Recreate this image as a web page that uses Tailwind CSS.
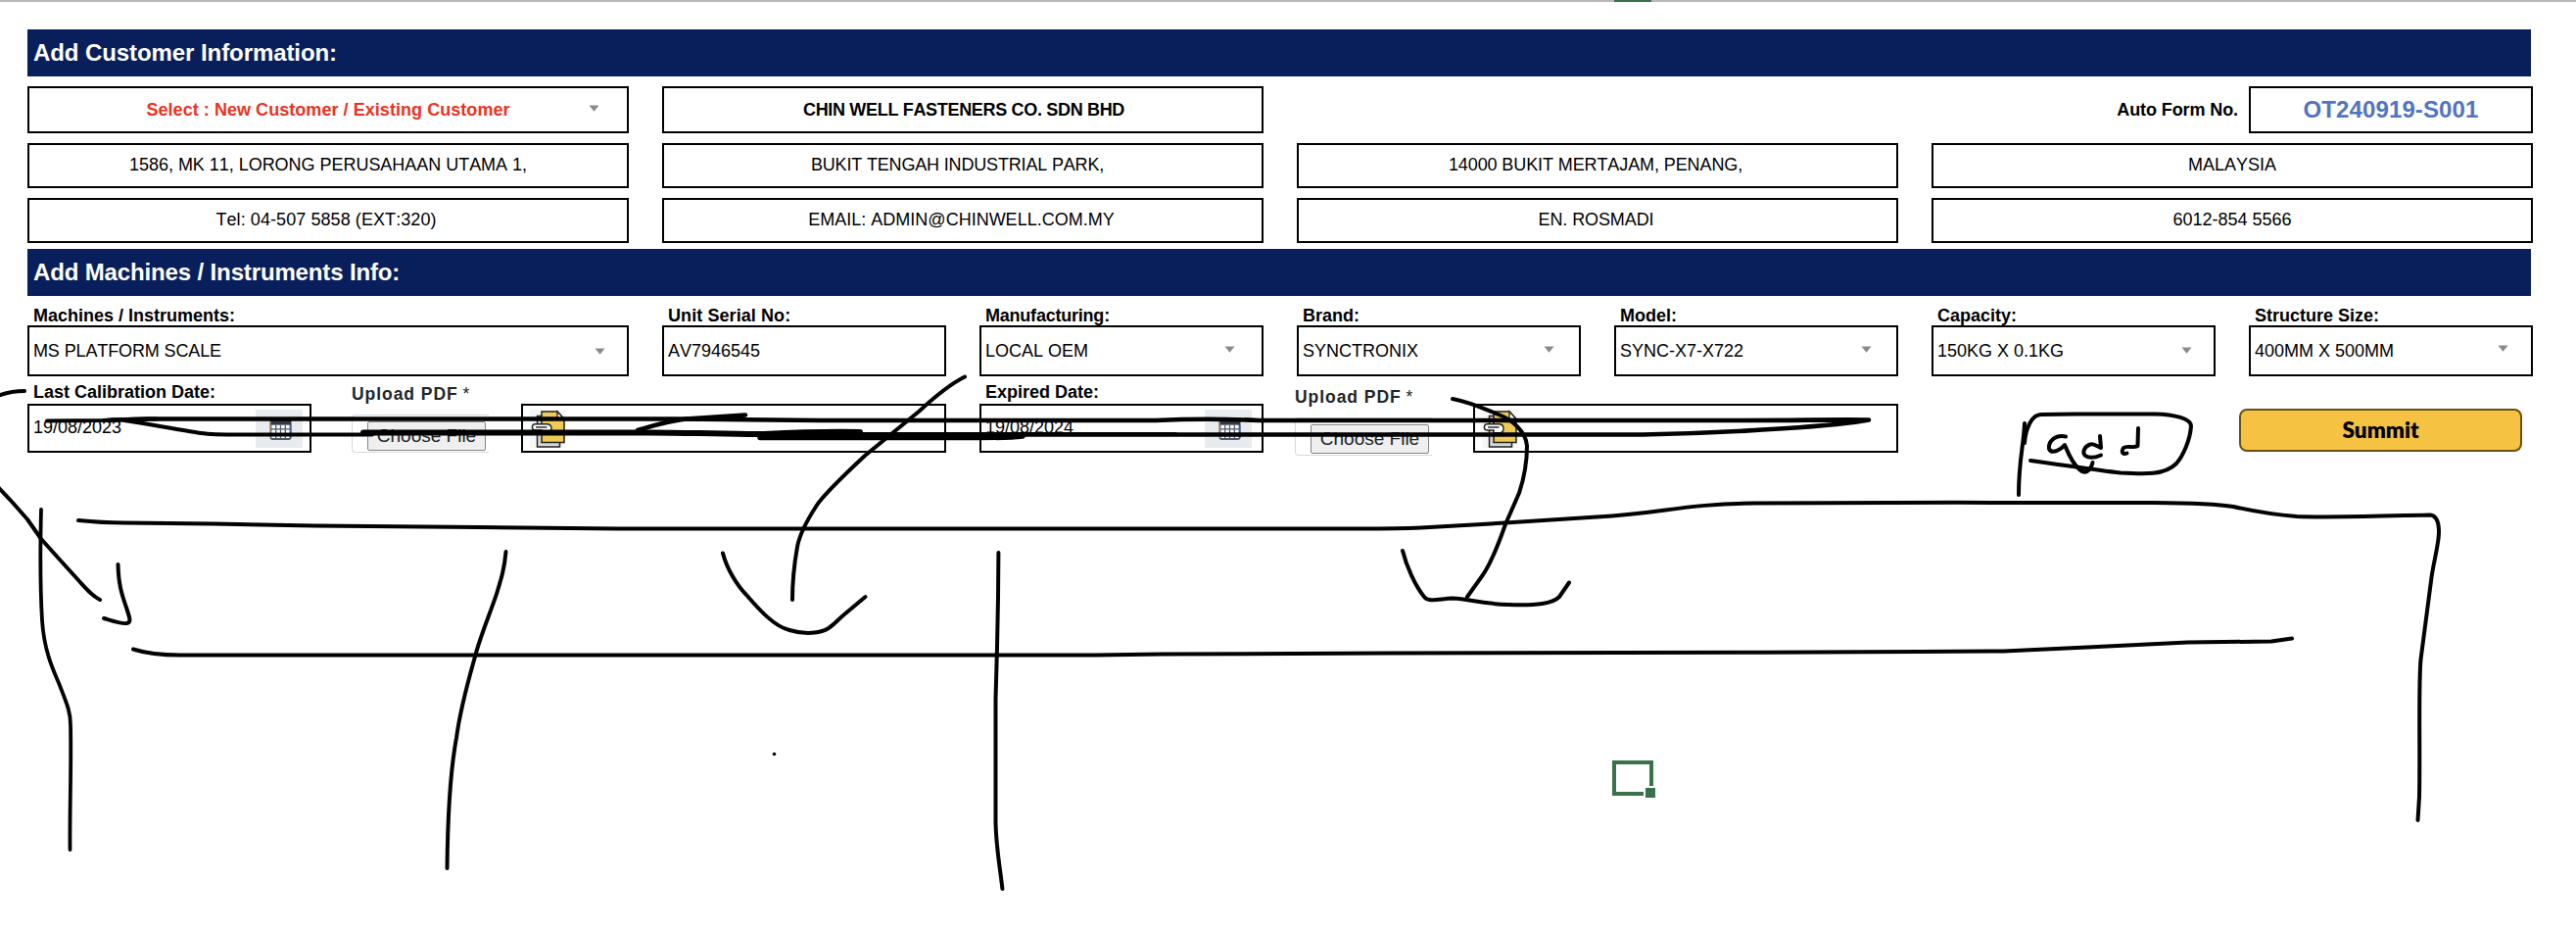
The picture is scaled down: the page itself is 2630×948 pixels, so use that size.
<!DOCTYPE html>
<html lang="en">
<head>
<meta charset="utf-8">
<title>Calibration Order Form</title>
<script src="https://cdn.jsdelivr.net/npm/@tailwindcss/browser@4"></script>
</head>
<body class="relative h-[948px] w-[2630px] overflow-hidden bg-white font-['Liberation_Sans',Arial,sans-serif] text-[18px] leading-[20px] text-black [font-kerning:none]">
<svg width="0" height="0" class="absolute">
  <defs>
    <symbol id="caret" viewBox="0 0 11 7"><path d="M0.5 0.5H10.5L5.5 6.8Z" fill="#8a8a8a"/></symbol>
    <symbol id="calendar" viewBox="0 0 24 24">
      <rect x="1.5" y="3" width="21" height="20" rx="1.5" fill="#fff" stroke="#4c5870" stroke-width="2"/>
      <path d="M1 3h22v5H1z" fill="#343a45"/>
      <path d="M2 12.5h20M2 17.5h20M7 8v15M12 8v15M17 8v15" stroke="#4c5870" stroke-width="1.3"/>
      <path d="M1 4v18" stroke="#d8a45a" stroke-width="1"/><path d="M23 8v14" stroke="#3d62c4" stroke-width="1"/>
      <path d="M6 0v4M18 0v4" stroke="#343a45" stroke-width="2"/>
    </symbol>
    <symbol id="attach" viewBox="0 0 36 39">
      <path d="M0 0h36v39H0z" fill="#f7f7f7"/>
      <path d="M7.500 6.500h23v31.500h-23z" fill="#d9d9d9" stroke="#222" stroke-width="1.5"/>
      <path d="M12 2h16l7 7.500V33.500H12z" fill="#efcb55" stroke="#222" stroke-width="1.5"/>
      <path d="M28 2v7.500h7z" fill="#fff" stroke="#222" stroke-width="1.3"/>
      <path d="M12 21H5.500a3 3 0 0 1 0-6.200H17c3.500 0 5 2 5 4.500s-1.500 4.500-4 4.500H12z" fill="#fff" stroke="#222" stroke-width="1.4"/>
      <path d="M6 18h11.500" stroke="#222" stroke-width="1.4"/>
    </symbol>
  </defs>
</svg>

<div class="flex h-[2px] bg-[#b8b8b8]"><div class="ml-[1648px] w-[38px] bg-[#39714a]"></div></div>

<main class="px-[28px] pt-[28px]">
  <h1 class="flex h-[48px] w-[2556px] items-center bg-[#091f5c] pl-[6px] text-[24px] leading-[28px] font-bold tracking-[-0.08px] text-white">Add Customer Information:</h1>

  <div class="mt-[10px] grid w-[2558px] grid-cols-8 gap-x-[34px] gap-y-[10px] text-center">
    <div class="relative col-span-2 h-[48px] border-2 border-black pt-[12px] font-bold tracking-[0.05px] text-[#e93323]">Select : New Customer / Existing Customer<svg class="absolute top-[17px] right-[28px] h-[7px] w-[11px]"><use href="#caret"/></svg></div>
    <div class="col-span-2 h-[48px] border-2 border-black pt-[12px] pl-[2px] font-bold tracking-[-0.32px]">CHIN WELL FASTENERS CO. SDN BHD</div>
    <div class="col-span-3 -mr-[23px] pt-[14px] text-right font-bold tracking-[-0.1px]">Auto Form No.</div>
    <div class="h-[48px] border-2 border-black pt-[8px] text-[24px] leading-[28px] font-bold tracking-[0.12px] text-[#5175c1]">OT240919-S001</div>

    <div class="col-span-2 h-[46px] border-2 border-black pt-[10px] tracking-[-0.03px]">1586, MK 11, LORONG PERUSAHAAN UTAMA 1,</div>
    <div class="col-span-2 h-[46px] border-2 border-black pt-[10px] pr-[11px] tracking-[-0.17px]">BUKIT TENGAH INDUSTRIAL PARK,</div>
    <div class="col-span-2 h-[46px] border-2 border-black pt-[10px] pr-[4px] tracking-[-0.1px]">14000 BUKIT MERTAJAM, PENANG,</div>
    <div class="col-span-2 h-[46px] border-2 border-black pt-[10px]">MALAYSIA</div>

    <div class="col-span-2 h-[46px] border-2 border-black pt-[10px] pr-[4px] tracking-[0.08px]">Tel: 04-507 5858 (EXT:320)</div>
    <div class="col-span-2 h-[46px] border-2 border-black pt-[10px] pr-[3px]">EMAIL: ADMIN@CHINWELL.COM.MY</div>
    <div class="col-span-2 h-[46px] border-2 border-black pt-[10px] pr-[3px] tracking-[-0.1px]">EN. ROSMADI</div>
    <div class="col-span-2 h-[46px] border-2 border-black pt-[10px]">6012-854 5566</div>
  </div>

  <h2 class="mt-[6px] flex h-[48px] w-[2556px] items-center bg-[#091f5c] pl-[6px] text-[24px] leading-[28px] font-bold tracking-[-0.14px] text-white">Add Machines / Instruments Info:</h2>

  <div class="grid w-[2558px] grid-cols-8 gap-x-[34px]">
    <div class="col-span-2"><div class="h-[30px] pt-[10px] pl-[6px] font-bold">Machines / Instruments:</div>
      <div class="flex h-[52px] items-center justify-between border-2 border-black pr-[22px] pl-[4px]"><span class="tracking-[-0.12px]">MS PLATFORM SCALE</span><svg class="h-[7px] w-[11px]"><use href="#caret"/></svg></div></div>
    <div><div class="h-[30px] pt-[10px] pl-[6px] font-bold tracking-[0.08px]">Unit Serial No:</div>
      <div class="flex h-[52px] items-center border-2 border-black pl-[4px]">AV7946545</div></div>
    <div><div class="h-[30px] pt-[10px] pl-[6px] font-bold tracking-[-0.22px]">Manufacturing:</div>
      <div class="flex h-[52px] items-center justify-between border-2 border-black pr-[27px] pl-[4px]">LOCAL OEM<svg class="mb-[4px] h-[7px] w-[11px]"><use href="#caret"/></svg></div></div>
    <div><div class="h-[30px] pt-[10px] pl-[6px] font-bold">Brand:</div>
      <div class="flex h-[52px] items-center justify-between border-2 border-black pr-[25px] pl-[4px]">SYNCTRONIX<svg class="mb-[4px] h-[7px] w-[11px]"><use href="#caret"/></svg></div></div>
    <div><div class="h-[30px] pt-[10px] pl-[6px] font-bold">Model:</div>
      <div class="flex h-[52px] items-center justify-between border-2 border-black pr-[25px] pl-[4px]">SYNC-X7-X722<svg class="mb-[4px] h-[7px] w-[11px]"><use href="#caret"/></svg></div></div>
    <div><div class="h-[30px] pt-[10px] pl-[6px] font-bold">Capacity:</div>
      <div class="flex h-[52px] items-center justify-between border-2 border-black pr-[22px] pl-[4px]">150KG X 0.1KG<svg class="mb-[2px] h-[7px] w-[11px]"><use href="#caret"/></svg></div></div>
    <div><div class="h-[30px] pt-[10px] pl-[6px] font-bold">Structure Size:</div>
      <div class="flex h-[52px] items-center justify-between border-2 border-black pr-[23px] pl-[4px]">400MM X 500MM<svg class="mb-[6px] h-[7px] w-[11px]"><use href="#caret"/></svg></div></div>
  </div>

  <div class="flex h-[84px]">
    <div class="w-[290px]"><div class="h-[28px] pt-[6px] pl-[6px] font-bold">Last Calibration Date:</div>
      <div class="flex h-[50px] justify-between border-2 border-black pt-[4px] pr-[7px] pl-[4px]"><span class="pt-[8px]">19/08/2023</span><span class="flex h-[39px] w-[48px] items-end justify-center bg-[#e8ecef] pb-[8px]"><svg class="ml-[2px] h-[23px] w-[23px]"><use href="#calendar"/></svg></span></div></div>
    <div class="w-[214px] pt-[9px] pl-[41px] text-[#212529]"><div class="h-[30px] text-[17.5px] leading-[18px] font-bold tracking-[0.95px]">Upload PDF <span class="-ml-[1px] font-normal">*</span></div>
      <div class="h-[39px] w-[140px] rounded-l-[4px] border border-r-0 border-[#d5dade] pt-[6px] pl-[15px]"><button class="block h-[30px] w-[121px] rounded-[2px] border border-[#858585] bg-[#efefef] text-[19px] leading-[24px]">Choose File</button></div></div>
    <div class="w-[434px] pt-[28px]"><div class="h-[50px] border-2 border-black pt-[4px] pl-[7px]"><svg class="h-[39px] w-[36px]"><use href="#attach"/></svg></div></div>
    <div class="ml-[34px] w-[290px]"><div class="h-[28px] pt-[6px] pl-[6px] font-bold">Expired Date:</div>
      <div class="flex h-[50px] justify-between border-2 border-black pt-[4px] pr-[10px] pl-[4px]"><span class="pt-[8px]">19/08/2024</span><span class="flex h-[39px] w-[48px] items-end justify-center bg-[#e8ecef] pb-[8px]"><svg class="ml-[2px] h-[23px] w-[23px]"><use href="#calendar"/></svg></span></div></div>
    <div class="w-[214px] pt-[12px] pl-[32px] text-[#212529]"><div class="h-[30px] text-[17.5px] leading-[18px] font-bold tracking-[0.95px]">Upload PDF <span class="-ml-[1px] font-normal">*</span></div>
      <div class="h-[39px] w-[140px] rounded-l-[4px] border border-r-0 border-[#d5dade] pt-[6px] pl-[15px]"><button class="block h-[30px] w-[121px] rounded-[2px] border border-[#858585] bg-[#efefef] text-[19px] leading-[24px]">Choose File</button></div></div>
    <div class="w-[434px] pt-[28px]"><div class="h-[50px] border-2 border-black pt-[4px] pl-[7px]"><svg class="h-[39px] w-[36px]"><use href="#attach"/></svg></div></div>
    <div class="pt-[33px] pl-[348px]"><button class="block h-[44px] w-[289px] rounded-[8px] border-2 border-[#6b4f14] bg-[#f5c242] font-[Lato,sans-serif] text-[22.5px] leading-[38px] font-extrabold">Summit</button></div>
  </div>
</main>

<!-- selected sheet cell -->
<div class="absolute top-[776px] left-[1646px] h-[36px] w-[42px] border-4 border-[#39714a]"></div>
<div class="absolute top-[802px] left-[1678px] h-[14px] w-[14px] border-2 border-white bg-[#39714a]"></div>

<!-- freehand ink layer -->
<svg class="absolute top-0 left-0" width="2630" height="948" viewBox="0 0 2630 948" fill="none" stroke="#000" stroke-width="4" stroke-linecap="round" stroke-linejoin="round">
  <path d="M-2 404C8 400 18 399 25 399"/>
  <path d="M-2 497L13 513L28 530L42 550L60 570L80 592C88 601 94 608 102 612"/>
  <path d="M120.500 576C121 598 125 608 129 620C133 632 134 635 129.500 636C124 637 116 634 106 631"/>
  <path stroke-width="3.800" d="M42 520C41 560 41 600 43 633C45 665 55 685 60 697C70 722 72 728 72 740C73 780 71 830 71.500 867"/>
  <path d="M80 531C100 533 110 533.500 126 533.500L218 534.500L321 536.500L488 538L631 539.500H1388C1420 539.500 1440 539 1451 538.500L1537 533.500L1646 526.500C1700 522 1730 514 1790 513.500C1850 513 2120 512.500 2199 513C2255 513.500 2268 515 2280 517C2302 522 2318 525 2345 527C2380 528.500 2430 526.500 2481 525.500C2487 526 2490 532 2490 543C2490 556 2484 575 2482 593L2471.500 673C2469 700 2471 770 2470 813L2468.500 837"/>
  <path d="M136 662.500C150 667 165 668.500 184 668.500H1118L1187 667.500L1417 666.500L1800 665.700L1960 665L2045.500 664.500L2131 660.500L2233.500 655.500L2319 654.500L2340 651.500"/>
  <path d="M516.500 563C515 580 512 590 507 606C500 627 490 650 485 670C478 695 470 722 466 753C460 785 457 840 456.500 886"/>
  <path d="M1019.400 564L1019 610L1018 660L1016.500 713V840C1017 865 1021 885 1023.400 907"/>
  <path d="M738 564.500C742 580 752 597 762 607C775 622 790 639 806 643C822 648 838 646 846 641C852 637 857 631 862 627L883.500 609"/>
  <path d="M985 384.500C968 393 952 407 938 420L883 465C868 479 840 505 833 517C824 531 816 547 814 558C811 575 809 590 809 612"/>
  <path d="M1483 407C1503 411 1515 417 1530 423C1543 428 1558 440 1559 455C1559 470 1556 488 1551 503L1537 535C1530 555 1521 577 1513 588L1498 609"/>
  <path d="M1432 562C1436 578 1445 598 1454 609C1458 615 1470 611 1483 610.500C1500 611 1510 616 1540 617C1570 618 1585 616 1592 609L1602 594.500"/>
  <circle cx="790.500" cy="769.500" r="1.800" fill="#000" stroke="none"/>
  <!-- sketched add button -->
  <path d="M2067 432C2066 455 2061 470 2061 505"/>
  <path d="M2067 452C2068 438 2074 423 2084 423L2120 422.500H2200C2220 423 2237 427 2237 435C2236 449 2229 465 2222 473C2210 485 2190 484 2165 482.500C2140 480 2110 475 2073 470"/>
  <path d="M2109 445.500C2097 443 2091 452 2092 458C2095 464 2104 459 2108 454C2111 461 2115 472 2123 479C2128 484 2134 482 2136.500 472"/>
  <path d="M2144 445L2145 457C2142 456 2138 452 2134 453.500C2129 455 2125 461 2129 465C2133 468 2139 467 2145 464.500"/>
  <path d="M2183 437L2182.500 455C2178 458 2172 454 2168 457C2165 462 2168 464 2171.500 462.500"/>
  <!-- strike-through over the date row -->
  <path stroke-width="4" d="M48 429.500L105 429C125 427.500 140 427.500 160 427.500"/>
  <path stroke-width="4.600" d="M110 429L150 427.500H690L837 429H1180C1210 427.500 1255 427.500 1285 429H1750C1840 429 1870 428 1908 428.500C1880 434 1780 441.500 1677 443.500H900"/>
  <path stroke-width="4" d="M127 429C160 434 190 440 205 442C220 444 240 443.500 260 443.500H380"/>
  <path stroke-width="6" d="M371 441.500H651C700 441 720 443 780 443C820 441 850 440.500 878 441"/>
  <path d="M651 439C665 435 680 430 700 427.500L761 423.500" stroke-width="4.500"/>
  <path stroke-width="5.500" d="M776 446.500H1000C1020 446.500 1035 446 1044 445"/>
  <path stroke-width="4" d="M776 443H1200"/>
</svg>
</body>
</html>
